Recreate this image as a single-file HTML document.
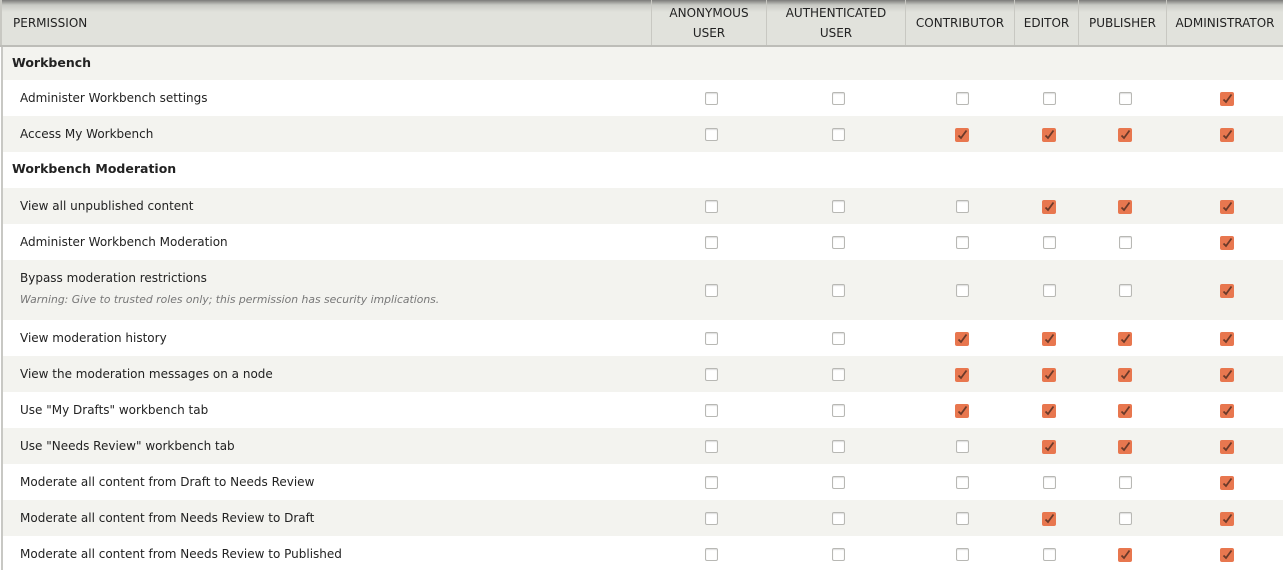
<!DOCTYPE html>
<html><head><meta charset="utf-8"><style>
body{margin:0;width:1283px;height:570px;overflow:hidden;background:#fff;font-family:"DejaVu Sans","Liberation Sans",sans-serif;font-size:12px;color:#222;position:relative}
.hdr{position:absolute;left:0;top:0;width:1283px;height:45px;background:linear-gradient(#7a7a78 0px,#c9cac5 5px,#e1e2dc 12px,#e1e2dc 100%);border-bottom:2px solid #bdbdb8}
.hc{position:absolute;top:0;height:45px;display:flex;align-items:center;justify-content:center;text-align:center;font-size:12px;line-height:20px;color:#222;border-left:1px solid #c8c8c2;box-sizing:border-box}
.row{position:absolute;left:2px;width:1281px}
.lbl{position:absolute;left:18px;font-size:12px}
.grp{position:absolute;left:10px;font-weight:bold;font-size:12.5px}
.cb{position:absolute;width:11px;height:11px;border:1px solid #b8b8b4;border-radius:2px;background:#fff;box-shadow:inset 0 1px 1px #ddd}
.ck{position:absolute;width:14px;height:14px;border-radius:2px;background:#e8774f}
.ck svg{position:absolute;left:1px;top:1px}
.lb{position:absolute;left:1px;top:47px;width:2px;height:523px;background:#c8c8c4}
</style></head><body>
<div class="hdr">
<div class="hc" style="left:0;width:651px;justify-content:flex-start;padding-left:11px;border-left:2px solid #c8c8c2">PERMISSION</div>
<div class="hc" style="left:651px;width:115px">ANONYMOUS<br>USER</div>
<div class="hc" style="left:766px;width:139px">AUTHENTICATED<br>USER</div>
<div class="hc" style="left:905px;width:109px">CONTRIBUTOR</div>
<div class="hc" style="left:1014px;width:64px">EDITOR</div>
<div class="hc" style="left:1078px;width:88px">PUBLISHER</div>
<div class="hc" style="left:1166px;width:117px">ADMINISTRATOR</div>
</div>
<div id="rows"></div>
<div class="lb"></div>
<script>
var rows=[
["g","Workbench",47,33,1],
["r","Administer Workbench settings",80,36,0,"000001"],
["r","Access My Workbench",116,36,1,"001111"],
["g","Workbench Moderation",152,36,0],
["r","View all unpublished content",188,36,1,"000111"],
["r","Administer Workbench Moderation",224,36,0,"000001"],
["w","Bypass moderation restrictions",260,60,1,"000001"],
["r","View moderation history",320,36,0,"001111"],
["r","View the moderation messages on a node",356,36,1,"001111"],
["r","Use \"My Drafts\" workbench tab",392,36,0,"001111"],
["r","Use \"Needs Review\" workbench tab",428,36,1,"000111"],
["r","Moderate all content from Draft to Needs Review",464,36,0,"000001"],
["r","Moderate all content from Needs Review to Draft",500,36,1,"000101"],
["r","Moderate all content from Needs Review to Published",536,36,0,"000011"]];
var cx=[711,838,962,1049,1125,1227];
var h="";
rows.forEach(function(r){
var bg=r[4]?"#f3f3ef":"#fff";
h+='<div class="row" style="top:'+r[2]+'px;height:'+r[3]+'px;background:'+bg+'">';
if(r[0]=="g"){h+='<div class="grp" style="top:'+(r[3]/2-9)+'px">'+r[1]+'</div>';}
else if(r[0]=="r"){h+='<div class="lbl" style="top:11px">'+r[1].replace(/"/g,'&quot;')+'</div>';}
else{h+='<div class="lbl" style="top:11px">'+r[1]+'</div><div class="lbl" style="top:33px;font-size:10.8px;font-style:italic;color:#777">Warning: Give to trusted roles only; this permission has security implications.</div>';}
if(r[5]){var cy=r[3]/2+1;for(var i=0;i<6;i++){var x=cx[i]-2-6;
if(r[5][i]=="1")h+='<div class="ck" style="left:'+(x-1)+'px;top:'+(cy-7)+'px"><svg width="12" height="12" viewBox="0 0 12 12"><path d="M2.5 6.5 L5 9 L10.5 1.5" fill="none" stroke="#6b3a2a" stroke-width="1.8"/></svg></div>';
else h+='<div class="cb" style="left:'+x+'px;top:'+(cy-7)+'px"></div>';}}
h+='</div>';});
document.getElementById("rows").innerHTML=h;
</script>
</body></html>
